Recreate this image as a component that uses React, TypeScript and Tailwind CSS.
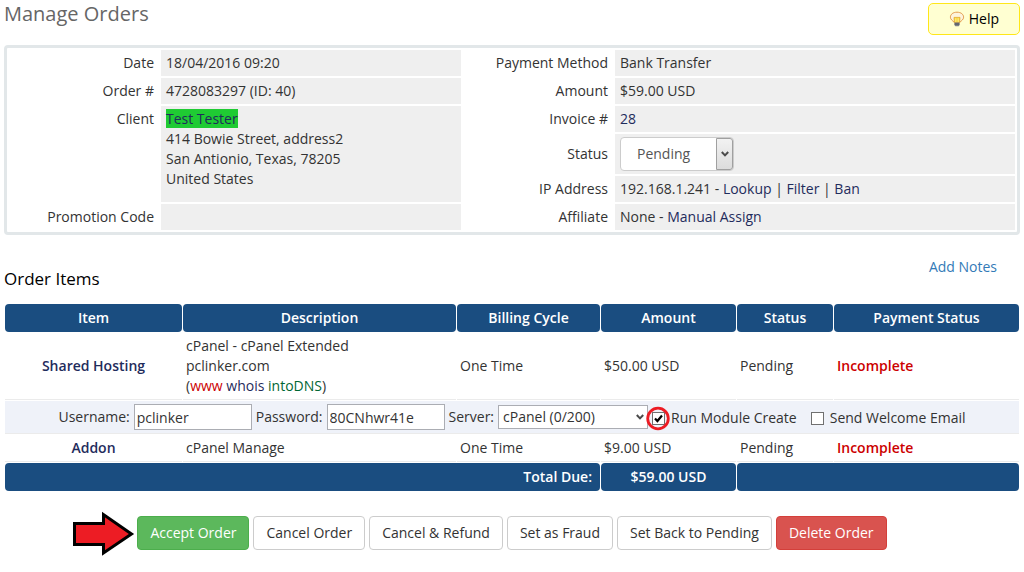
import { useState, type ReactNode } from 'react'
import clsx from 'clsx'

type OrderItem = {
  name: string
  description: ReactNode
  cycle: string
  amount: string
}

const hosting: OrderItem = {
  name: 'Shared Hosting',
  description: (
    <>
      cPanel - cPanel Extended
      <br />
      pclinker.com
      <br />(<a href="#www" className="text-[#cc0000]">www</a>{' '}
      <a href="#whois" className="text-[#1f2c5c]">whois</a>{' '}
      <a href="#intodns" className="text-[#006633]">intoDNS</a>)
    </>
  ),
  cycle: 'One Time',
  amount: '$50.00 USD',
}

const addon: OrderItem = {
  name: 'Addon',
  description: 'cPanel Manage',
  cycle: 'One Time',
  amount: '$9.00 USD',
}

export default function App() {
  return (
    <main className="px-1 pt-[3px] pb-5 font-['Open_Sans',sans-serif] text-sm text-[#333333]">
      <header className="mb-2.5 flex items-start justify-between">
        <h1 className="text-xl leading-[22px] text-[#666666]">Manage Orders</h1>
        <button
          type="button"
          className="flex h-8 items-center gap-1 rounded-[5px] border border-[#ffe719] bg-[#ffffd2] px-5 text-black"
        >
          <BulbIcon />
          Help
        </button>
      </header>
      <OrderSummary />
      <div className="mb-3 flex items-start justify-between pt-[22px] pr-[23px]">
        <h2 className="mt-2.5 text-[17px] leading-6 text-black">Order Items</h2>
        <a href="#notes" className="text-[#337ab7]">Add Notes</a>
      </div>
      <ItemsTable />
      <Actions />
    </main>
  )
}

function OrderSummary() {
  return (
    <div className="rounded-[4px] border-3 border-[#e2e7e9]">
      <table className="w-full table-fixed border-separate border-spacing-[2px]">
        <colgroup>
          <col className="w-[15%]" />
          <col className="w-[30%]" />
          <col className="w-[15%]" />
          <col className="w-[40%]" />
        </colgroup>
        <tbody>
          <tr>
            <Label>Date</Label>
            <Value>18/04/2016 09:20</Value>
            <Label>Payment Method</Label>
            <Value>Bank Transfer</Value>
          </tr>
          <tr>
            <Label>Order #</Label>
            <Value>4728083297 (ID: 40)</Value>
            <Label>Amount</Label>
            <Value>$59.00 USD</Value>
          </tr>
          <tr>
            <Label rowSpan={3}>Client</Label>
            <Value rowSpan={3}>
              <NavyLink className="bg-[#1fcb33]">Test Tester</NavyLink>
              <br />
              414 Bowie Street, address2
              <br />
              San Antionio, Texas, 78205
              <br />
              United States
            </Value>
            <Label>Invoice #</Label>
            <Value>
              <NavyLink>28</NavyLink>
            </Value>
          </tr>
          <tr>
            <Label>
              <label htmlFor="order-status">Status</label>
            </Label>
            <Value>
              <StatusSelect />
            </Value>
          </tr>
          <tr>
            <Label>IP Address</Label>
            <Value>
              192.168.1.241 - <NavyLink>Lookup</NavyLink> | <NavyLink>Filter</NavyLink> |{' '}
              <NavyLink>Ban</NavyLink>
            </Value>
          </tr>
          <tr>
            <Label>Promotion Code</Label>
            <Value />
            <Label>Affiliate</Label>
            <Value>
              None - <NavyLink>Manual Assign</NavyLink>
            </Value>
          </tr>
        </tbody>
      </table>
    </div>
  )
}

function Label({ children, rowSpan }: { children: ReactNode; rowSpan?: number }) {
  return (
    <th
      scope="row"
      rowSpan={rowSpan}
      className={clsx('px-[5px] py-[3px] text-right font-normal', rowSpan ? 'align-top' : 'align-middle')}
    >
      {children}
    </th>
  )
}

function Value({ children, rowSpan }: { children?: ReactNode; rowSpan?: number }) {
  return (
    <td
      rowSpan={rowSpan}
      className={clsx('bg-[#efefef] px-[5px] py-[3px]', rowSpan ? 'align-top' : 'align-middle')}
    >
      {children}
    </td>
  )
}

function NavyLink({ children, className }: { children: ReactNode; className?: string }) {
  return (
    <a href="#" className={clsx('text-[#1f2c5c]', className)}>
      {children}
    </a>
  )
}

function StatusSelect() {
  return (
    <div className="relative w-[114px]">
      <select
        id="order-status"
        defaultValue="Pending"
        className="block h-[34px] w-full appearance-none rounded-[4px] border border-[#cccccc] bg-white pl-4 text-[#555555]"
      >
        <option>Pending</option>
        <option>Active</option>
        <option>Fraud</option>
        <option>Cancelled</option>
      </select>
      <span className="pointer-events-none absolute inset-y-px right-px flex w-[17px] items-center justify-center rounded-r-[3px] border border-[#a0a0a0] bg-linear-to-b from-[#f2f2f2] to-[#dcdcdc]">
        <Chevron />
      </span>
    </div>
  )
}

const headClass = 'rounded-[4px] bg-[#1a4d80] p-1 font-semibold text-white'

function ItemsTable() {
  return (
    <table className="w-full table-fixed border-separate border-spacing-px">
      <colgroup>
        <col className="w-[177px]" />
        <col />
        <col className="w-[143px]" />
        <col className="w-[135px]" />
        <col className="w-[96px]" />
        <col className="w-[185px]" />
      </colgroup>
      <thead>
        <tr>
          {['Item', 'Description', 'Billing Cycle', 'Amount', 'Status', 'Payment Status'].map((h) => (
            <th key={h} scope="col" className={headClass}>
              {h}
            </th>
          ))}
        </tr>
      </thead>
      <tbody>
        <ItemRow item={hosting} />
        <tr>
          <td colSpan={6} className="border-b border-[#ebebeb] bg-[#eff2f9] py-[3px]">
            <ModuleSettings />
          </td>
        </tr>
        <ItemRow item={addon} />
      </tbody>
      <tfoot>
        <tr>
          <th colSpan={3} scope="row" className={clsx(headClass, 'pr-2 text-right')}>
            Total Due:
          </th>
          <td className={clsx(headClass, 'text-center')}>$59.00 USD</td>
          <td colSpan={2} className={headClass} />
        </tr>
      </tfoot>
    </table>
  )
}

function ItemRow({ item }: { item: OrderItem }) {
  const cell = 'border-b border-[#ebebeb] p-[3px]'
  return (
    <tr>
      <td className={clsx(cell, 'text-center font-semibold')}>
        <NavyLink>{item.name}</NavyLink>
      </td>
      <td className={cell}>{item.description}</td>
      <td className={cell}>{item.cycle}</td>
      <td className={cell}>{item.amount}</td>
      <td className={cell}>Pending</td>
      <td className={clsx(cell, 'font-semibold text-[#cc0000]')}>Incomplete</td>
    </tr>
  )
}

function ModuleSettings() {
  const [runCreate, setRunCreate] = useState(true)
  const [sendEmail, setSendEmail] = useState(false)
  const field = 'h-[26px] w-[118px] border border-[#abadb3] bg-white px-0.5'

  return (
    <div className="flex items-center justify-center gap-1">
      <label htmlFor="username">Username:</label>
      <input id="username" type="text" defaultValue="pclinker" className={field} />
      <label htmlFor="password">Password:</label>
      <input id="password" type="text" defaultValue="80CNhwr41e" className={field} />
      <label htmlFor="server">Server:</label>
      <div className="relative">
        <select
          id="server"
          className="block h-6 w-[150px] appearance-none border border-[#abadb3] bg-white pl-1"
        >
          <option>cPanel (0/200)</option>
        </select>
        <span className="pointer-events-none absolute inset-y-0 right-1 flex items-center">
          <Chevron />
        </span>
      </div>
      <div className="flex items-center gap-3.5 pt-0.5">
        <Tick id="run-create" label="Run Module Create" checked={runCreate} onChange={setRunCreate} ringed />
        <Tick id="send-email" label="Send Welcome Email" checked={sendEmail} onChange={setSendEmail} />
      </div>
    </div>
  )
}

type TickProps = {
  id: string
  label: string
  checked: boolean
  onChange: (value: boolean) => void
  ringed?: boolean
}

function Tick({ id, label, checked, onChange, ringed }: TickProps) {
  return (
    <div className="flex items-center gap-1.5">
      <span className="relative flex">
        <input
          id={id}
          type="checkbox"
          checked={checked}
          onChange={(e) => onChange(e.target.checked)}
          className="size-[13px] appearance-none border border-[#707070] bg-white"
        />
        {checked && (
          <svg viewBox="0 0 13 13" className="pointer-events-none absolute inset-0 size-[13px]">
            <path d="M3 6.5 L5.4 9 L10 3.5" fill="none" stroke="#000" strokeWidth="2.2" />
          </svg>
        )}
        {ringed && (
          <svg viewBox="0 0 25 25" className="pointer-events-none absolute -top-1.5 -left-1.5 size-[25px] max-w-none">
            <circle cx="12" cy="12.5" r="10.3" fill="none" stroke="#ed1c24" strokeWidth="2.8" />
          </svg>
        )}
      </span>
      <label htmlFor={id}>{label}</label>
    </div>
  )
}

const plain = 'border-[#cccccc] bg-white text-[#333333]'

const actions = [
  { label: 'Cancel Order', style: plain },
  { label: 'Cancel & Refund', style: plain },
  { label: 'Set as Fraud', style: plain },
  { label: 'Set Back to Pending', style: plain },
  { label: 'Delete Order', style: 'border-[#d43f3a] bg-[#d9534f] text-white' },
]

function Actions() {
  const button = 'h-[34px] rounded-[4px] border px-3'
  return (
    <div className="mt-6 flex justify-center gap-1">
      <div className="relative">
        <button type="button" className={clsx(button, 'border-[#4cae4c] bg-[#5cb85c] text-white')}>
          Accept Order
        </button>
        <svg
          viewBox="0 0 62 46"
          className="pointer-events-none absolute -top-1.5 right-full mr-0.5 h-[46px] w-[62px] max-w-none"
        >
          <path
            d="M1.5 13.5 H30.5 V4.5 L58.5 24 L30.5 43 V34.5 H1.5 Z"
            fill="#ed1c24"
            stroke="#000"
            strokeWidth="3"
          />
        </svg>
      </div>
      {actions.map((a) => (
        <button key={a.label} type="button" className={clsx(button, a.style)}>
          {a.label}
        </button>
      ))}
    </div>
  )
}

function Chevron() {
  return (
    <svg viewBox="0 0 8 6" className="h-1.5 w-2">
      <path d="M0.8 1 L4 4.4 L7.2 1" fill="none" stroke="#4a4a4a" strokeWidth="2" />
    </svg>
  )
}

function BulbIcon() {
  return (
    <svg viewBox="0 0 16 16" className="size-4">
      <path
        d="M8 1.2 C4 1.2 1.4 3.4 1.4 6.2 C1.4 8.6 3.6 9.6 5 11.2 H11 C12.4 9.6 14.6 8.6 14.6 6.2 C14.6 3.4 12 1.2 8 1.2 Z"
        fill="#fdf3dc"
        stroke="#e39a4c"
      />
      <path d="M5 6.4 H11 L10.6 11.4 H5.4 Z" fill="#f7d93c" stroke="#e3a92c" strokeWidth="0.8" />
      <path d="M6.8 7.2 V11 M9.2 7.2 V11" stroke="#fff3a0" strokeWidth="0.8" />
      <path d="M5.4 11.6 H10.6 V14 L9.6 15.2 H6.4 L5.4 14 Z" fill="#7b7f88" />
      <path d="M5.6 13 H10.4" stroke="#3f434a" strokeWidth="0.8" />
    </svg>
  )
}
